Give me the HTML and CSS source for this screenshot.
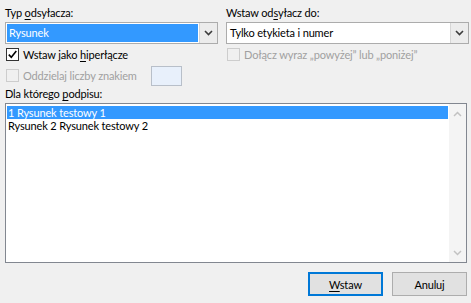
FILE: index.html
```html
<!DOCTYPE html>
<html lang="pl">
<head>
<meta charset="utf-8">
<link rel="stylesheet" href="styles.css">
</head>
<body>
<div class="dialog">
  <div class="top">
    <div class="col left">
      <div class="lbl">Typ <u>o</u>dsyłacza:</div>
      <div class="combo">
        <div class="val"><span class="selbox">Rysunek</span></div>
        <div class="btn"><svg width="9" height="6" viewBox="0 0 9 6"><path d="M1 1 L4.5 4.5 L8 1" fill="none" stroke="#3c3c3c" stroke-width="1.6"/></svg></div>
      </div>
      <div class="check">
        <span class="box on"><svg width="11" height="11" viewBox="0 0 11 11"><path d="M1.8 5.6 L4.3 8.3 L9.3 2" fill="none" stroke="#000" stroke-width="1.6"/></svg></span>
        <span>Wstaw jako <u>h</u>iperłącze</span>
      </div>
      <div class="check row2 disabled">
        <span class="box"></span>
        <span>Oddzielaj liczby znakiem</span>
        <span class="tb"></span>
      </div>
    </div>
    <div class="col right">
      <div class="lbl">Wstaw od<u>s</u>yłacz do:</div>
      <div class="combo wide">
        <div class="val plain">Tylko etykieta i numer</div>
        <div class="btn"><svg width="9" height="6" viewBox="0 0 9 6"><path d="M1 1 L4.5 4.5 L8 1" fill="none" stroke="#3c3c3c" stroke-width="1.6"/></svg></div>
      </div>
      <div class="check disabled">
        <span class="box"></span>
        <span>Dołącz wyraz „powyżej” lub „poniżej”</span>
      </div>
    </div>
  </div>
  <div class="lbl">Dla którego <u>p</u>odpisu:</div>
  <div class="list">
    <div class="items">
      <div class="item sel">1 Rysunek testowy 1</div>
      <div class="item">Rysunek 2 Rysunek testowy 2</div>
    </div>
    <div class="sb">
      <svg width="9" height="6" viewBox="0 0 9 6"><path d="M1 5 L4.5 1.5 L8 5" fill="none" stroke="#c2c2c2" stroke-width="1.5"/></svg>
      <svg width="9" height="6" viewBox="0 0 9 6"><path d="M1 1 L4.5 4.5 L8 1" fill="none" stroke="#c2c2c2" stroke-width="1.5"/></svg>
    </div>
  </div>
  <div class="buttons">
    <button class="btnp default"><u>W</u>staw</button>
    <button class="btnp">Anuluj</button>
  </div>
</div>
</body>
</html>
```
FILE: styles.css
```css
html, body {
  margin: 0;
  padding: 0;
  background: #f0f0f0;
}
body {
  font-family: Lato, "Noto Sans", sans-serif;
  font-size: 11px;
  letter-spacing: -0.15px;
  color: #000;
  width: 471px;
  height: 303px;
  overflow: hidden;
}
u {
  text-decoration: underline;
  text-underline-offset: 2px;
}
.dialog {
  padding: 5px 2px 0 5px;
}
.top {
  display: grid;
  grid-template-columns: 213px 1fr;
  column-gap: 8px;
}
.lbl {
  height: 15px;
  line-height: 15px;
  margin-bottom: 2px;
}
.combo {
  display: flex;
  height: 22px;
  box-sizing: border-box;
  border: 1px solid #acacac;
  background: #fff;
}
.combo .val {
  flex: 1;
  padding: 1px 1px;
  display: flex;
}
.combo .selbox {
  flex: 1;
  background: #3399ff;
  color: #fff;
  line-height: 17px;
  padding-left: 2px;
}
.combo .val.plain {
  line-height: 18px;
  padding-left: 3px;
}
.combo .btn {
  width: 17px;
  background: #ececec;
  border-left: 1px solid #d6d6d6;
  display: flex;
  align-items: center;
  justify-content: center;
}
.check {
  display: flex;
  align-items: center;
  height: 21px;
  padding-left: 1px;
}
.box {
  width: 13px;
  height: 13px;
  box-sizing: border-box;
  border: 1px solid #333;
  background: #fff;
  margin-right: 4px;
  display: flex;
  align-items: center;
  justify-content: center;
}
.disabled {
  color: #a0a0a0;
}
.disabled .box {
  border-color: #cdcdcd;
  background: #f0f0f0;
}
.tb {
  width: 31px;
  height: 20px;
  box-sizing: border-box;
  border: 1px solid #b8bfc9;
  background: #e8f0fb;
  margin-left: 14px;
}
.list {
  display: flex;
  height: 160px;
  box-sizing: border-box;
  border: 1px solid #828790;
  background: #fff;
  margin-right: 2px;
}
.items {
  flex: 1;
  padding: 2px 1px 0 1px;
}
.item {
  height: 13px;
  line-height: 13px;
  padding-left: 1px;
  white-space: nowrap;
}
.item.sel {
  background: #3399ff;
  color: #fff;
}
.sb {
  width: 17px;
  background: #f4f4f4;
  display: flex;
  flex-direction: column;
  justify-content: space-between;
  align-items: center;
  padding: 7px 0 6px;
}
.buttons {
  display: flex;
  justify-content: flex-end;
  gap: 9px;
  margin-top: 9px;
  padding-right: 2px;
}
.btnp {
  font-family: inherit;
  font-size: 11px;
  letter-spacing: -0.15px;
  width: 75px;
  height: 24px;
  box-sizing: border-box;
  border: 1px solid #adadad;
  background: #e1e1e1;
  color: #000;
  padding: 0;
}
.btnp.default {
  border-color: #0078d7;
  box-shadow: inset 0 0 0 1px #0078d7;
}
```
